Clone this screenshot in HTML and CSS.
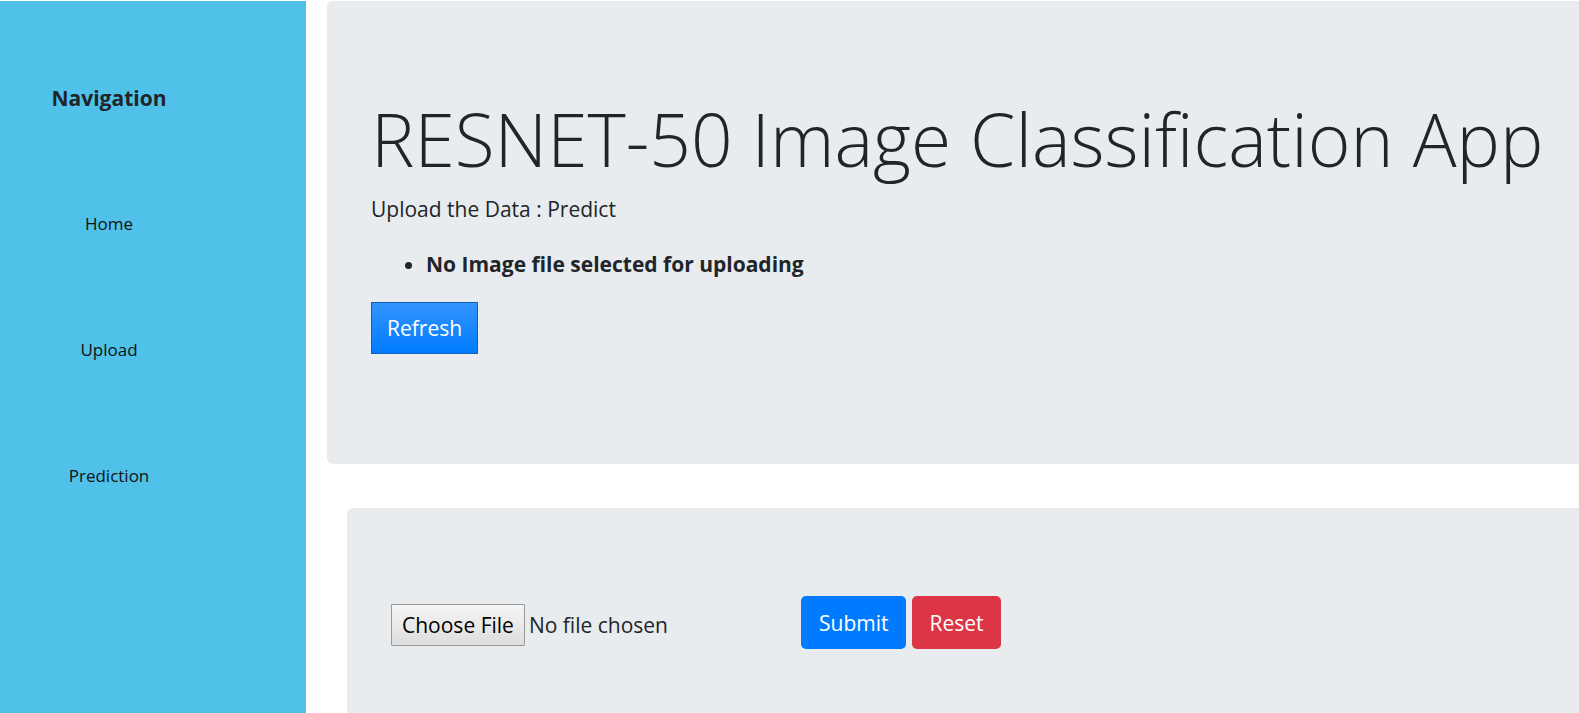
FILE: index.html
```html
<!DOCTYPE html>
<html lang="en">
<head>
<meta charset="utf-8">
<title>RESNET-50 Image Classification App</title>
<link rel="stylesheet" href="styles.css">
</head>
<body>
<div class="layout">
  <nav class="sidebar" aria-label="Navigation">
    <h2 class="sidebar-title">Navigation</h2>
    <a class="sidebar-link" href="#home">Home</a>
    <a class="sidebar-link" href="#upload">Upload</a>
    <a class="sidebar-link" href="#prediction">Prediction</a>
  </nav>
  <main class="content">
    <section class="panel" id="home">
      <h1 class="title">RESNET-50 Image Classification App</h1>
      <p class="lead">Upload the Data : Predict</p>
      <ul class="messages"><li>No Image file selected for uploading</li></ul>
      <button class="btn btn-refresh" type="button">Refresh</button>
    </section>
    <section class="panel panel-upload" id="upload">
      <form class="upload-form">
        <input class="file" type="file" aria-label="Image file">
        <div class="actions">
          <button class="btn btn-submit" type="button">Submit</button>
          <button class="btn btn-reset" type="reset">Reset</button>
        </div>
      </form>
    </section>
  </main>
</div>
</body>
</html>
```
FILE: styles.css
```css
* { box-sizing: border-box; }
body {
  margin: 0;
  padding-top: 1px;
  background: #fff;
  color: #212529;
  font-family: "Open Sans", "Noto Sans", sans-serif;
  font-size: 21px;
  line-height: 33px;
  overflow-x: hidden;
}
.layout { display: flex; min-height: calc(100vh - 1px); }
.sidebar {
  flex: 0 0 306px;
  padding: 81px 88px 0 0;
  background: #50c1e9;
  text-align: center;
}
.sidebar-title { margin: 0 0 92px; font-size: 21px; font-weight: 700; line-height: 33px; }
.sidebar-link {
  display: block;
  margin-bottom: 93px;
  color: #111;
  font-size: 17px;
  text-decoration: none;
}
.content { display: flex; flex: 1; flex-direction: column; min-width: 0; padding-left: 21px; }
.panel {
  margin-bottom: 44px;
  padding: 88px 44px 110px;
  background: #e8ecef;
  border-radius: 6px 0 0 6px;
}
.panel-upload {
  flex: 1;
  margin: 0 0 0 20px;
  padding-bottom: 44px;
  border-radius: 6px 0 0 0;
}
.title {
  margin: 0 0 4px;
  font-size: 73px;
  font-weight: 300;
  line-height: 100px;
  white-space: nowrap;
}
.lead { margin: 0 0 22px; }
.messages { margin: 0 0 21px; padding-left: 55px; font-weight: 700; }
.btn {
  display: block;
  padding: 9px 17px 8px;
  border: 1px solid transparent;
  border-radius: 5px;
  color: #fff;
  font: inherit;
  line-height: 34px;
}
.btn-refresh {
  padding: 9px 15px 8px;
  border-color: #1260b5;
  border-radius: 0;
  background: linear-gradient(#3395ff, #007bff);
  line-height: 33px;
}
.btn-submit { background: #007bff; }
.btn-reset { padding-inline: 16px; background: #dc3545; }
.upload-form { display: flex; align-items: flex-start; }
.file { flex: 0 0 410px; margin-top: 8px; font: inherit; color: inherit; }
.file::file-selector-button {
  margin: 0 4px 0 0;
  padding: 3px 10px;
  border: 1px solid #999;
  border-radius: 1px;
  background: linear-gradient(#f6f6f6, #ddd);
  color: #000;
  font: inherit;
  line-height: 34px;
}
.actions { display: flex; gap: 6px; }
```
